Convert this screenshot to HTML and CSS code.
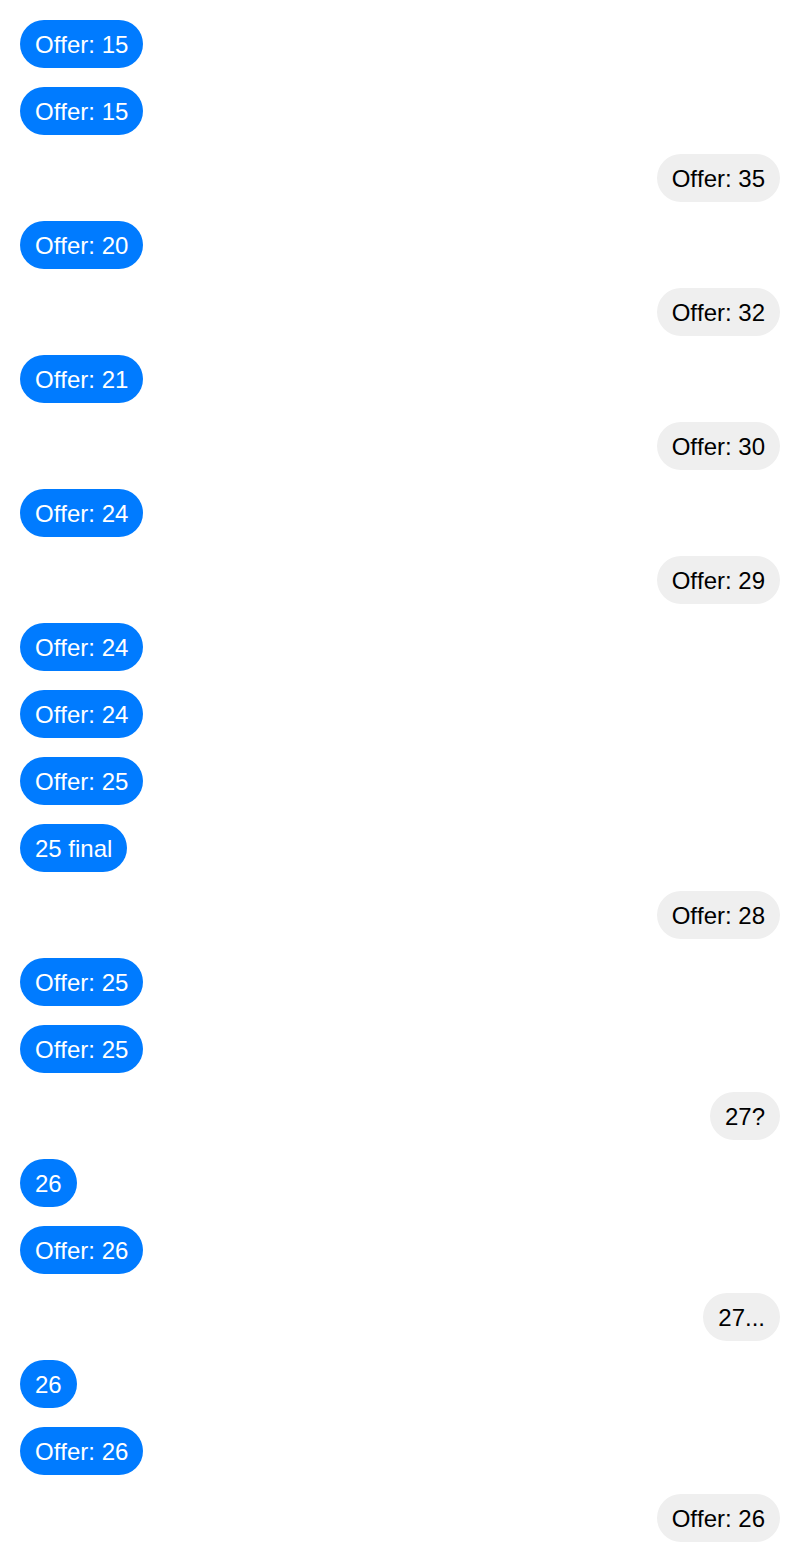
FILE: index.html
```html
<!DOCTYPE html>
<html>
<head>
<meta charset="utf-8">
<link rel="stylesheet" href="styles.css">
</head>
<body>
<div class="chat">
  <div class="msg me">Offer: 15</div>
  <div class="msg me">Offer: 15</div>
  <div class="msg them">Offer: 35</div>
  <div class="msg me">Offer: 20</div>
  <div class="msg them">Offer: 32</div>
  <div class="msg me">Offer: 21</div>
  <div class="msg them">Offer: 30</div>
  <div class="msg me">Offer: 24</div>
  <div class="msg them">Offer: 29</div>
  <div class="msg me">Offer: 24</div>
  <div class="msg me">Offer: 24</div>
  <div class="msg me">Offer: 25</div>
  <div class="msg me">25 final</div>
  <div class="msg them">Offer: 28</div>
  <div class="msg me">Offer: 25</div>
  <div class="msg me">Offer: 25</div>
  <div class="msg them">27?</div>
  <div class="msg me">26</div>
  <div class="msg me">Offer: 26</div>
  <div class="msg them">27...</div>
  <div class="msg me">26</div>
  <div class="msg me">Offer: 26</div>
  <div class="msg them">Offer: 26</div>
</div>
</body>
</html>
```

FILE: styles.css
```css
html, body {
  margin: 0;
  padding: 0;
  background: #ffffff;
}
.chat {
  display: flex;
  flex-direction: column;
  gap: 19px;
  padding: 20px 20px 19px;
  font-family: "Liberation Sans", Arial, sans-serif;
  font-size: 24px;
  font-kerning: none;
}
.msg {
  padding: 11px 15px 9px;
  line-height: 28px;
  border-radius: 24px;
  white-space: nowrap;
}
.me {
  align-self: flex-start;
  background: #007bff;
  color: #ffffff;
}
.them {
  align-self: flex-end;
  background: #efefef;
  color: #000000;
}
```
